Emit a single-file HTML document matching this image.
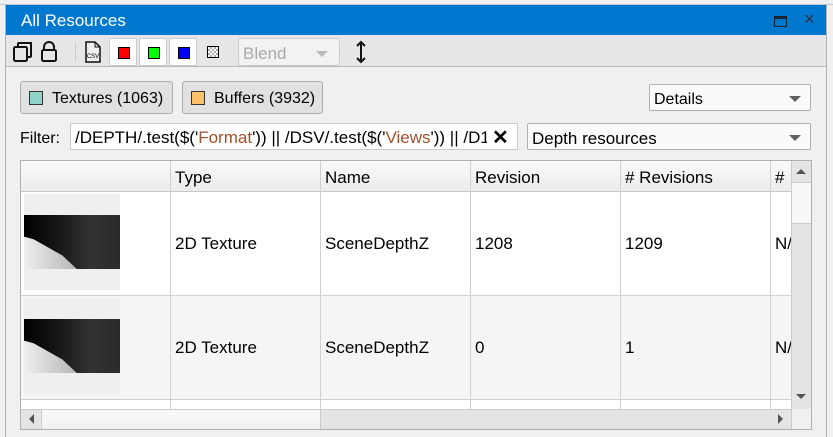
<!DOCTYPE html>
<html><head><style>
*{box-sizing:border-box;margin:0;padding:0}
body{width:833px;height:437px;background:#f0f0f0;font-family:"Liberation Sans",sans-serif;font-size:16px;color:#000;position:relative;overflow:hidden}
.a{position:absolute}
.title{left:6px;top:5px;width:800px;height:30px;background:#0078d0;color:#fff;font-size:17px}
.btn{background:#e1e1e1;border:1px solid #adadad;border-radius:3px}
.cb{background:#fff;border:1px solid #b0b0b0;border-radius:2px}
.arrow{width:0;height:0;border-left:6px solid transparent;border-right:6px solid transparent;border-top:6px solid #606060}
.vl{background:#d0d0d0;width:1px}
.hl{background:#d0d0d0;height:1px}
.th{left:0;top:21px;width:96px;height:54px;background:linear-gradient(90deg,#000,#1a1a1a 40%,#333 70%,#2a2a2a)}
.hill{left:0;top:0;width:96px;height:54px;background:linear-gradient(90deg,#eee,#bbb 50%,#888);clip-path:polygon(0 40%,10% 45%,25% 60%,40% 75%,55% 100%,0 100%)}
</style></head><body>
<div class="a" style="left:0;top:4px;width:833px;height:1px;background:#c8c8c8"></div>
<div class="a" style="left:5px;top:4px;width:1px;height:433px;background:#b0b0b0"></div>
<div class="a" style="left:826px;top:4px;width:1px;height:433px;background:#b0b0b0"></div>
<div class="a title" style="width:820px"><span class="a" style="left:15px;top:6px">All Resources</span>
<div class="a" style="left:768px;top:11px;width:13px;height:11px;border:1.5px solid #123;border-top-width:3px"></div>
<span class="a" style="left:798px;top:4px;color:#234;font-size:18px">×</span></div>
<div class="a" style="left:6px;top:35px;width:820px;height:32px;background:#e6e6e6;border-bottom:1px solid #b8b8b8"></div>
<svg class="a" style="left:12px;top:40px" width="60" height="24" viewBox="0 0 60 24" fill="none" stroke="#111" stroke-width="2">
<rect x="2" y="7" width="13" height="14" rx="1.5"/><path d="M6 7V4a1 1 0 0 1 1-1h12v13a1 1 0 0 1-1 1h-3"/>
<path d="M32 10V7a5 5 0 0 1 10 0v3"/><rect x="30" y="10" width="14" height="11" rx="1.5"/>
</svg>
<div class="a" style="left:75px;top:42px;width:1px;height:20px;background:#ccc"></div>
<svg class="a" style="left:83px;top:40px" width="20" height="24" viewBox="0 0 20 24"><path d="M3 2h9l5 5v15H3z" fill="#eee" stroke="#111" stroke-width="1.5"/><path d="M12 2v5h5" fill="none" stroke="#111"/><text x="10" y="18" font-size="6" text-anchor="middle" font-family="Liberation Sans">CSV</text></svg>
<div class="a" style="left:109px;top:38px;width:28px;height:28px;background:#fff;border:1px solid #ccc"><div class="a" style="left:8px;top:8px;width:12px;height:12px;background:#f00;border:1px solid #000"></div></div>
<div class="a" style="left:139px;top:38px;width:28px;height:28px;background:#fff;border:1px solid #ccc"><div class="a" style="left:8px;top:8px;width:12px;height:12px;background:#0f0;border:1px solid #000"></div></div>
<div class="a" style="left:169px;top:38px;width:28px;height:28px;background:#fff;border:1px solid #ccc"><div class="a" style="left:8px;top:8px;width:12px;height:12px;background:#00f;border:1px solid #000"></div></div>
<div class="a" style="left:207px;top:46px;width:12px;height:12px;border:1px solid #000;background:repeating-conic-gradient(#aaa 0 25%,#fff 0 50%) 0 0/4px 4px"></div>
<div class="a" style="left:238px;top:38px;width:102px;height:28px;background:#f2f2f2;border:1px solid #ccc;border-radius:3px;color:#aaa"><span class="a" style="left:4px;top:5px;font-size:17px">Blend</span><div class="a arrow" style="left:77px;top:12px;border-top-color:#bbb"></div></div>
<svg class="a" style="left:354px;top:40px" width="14" height="24" viewBox="0 0 14 24" fill="none" stroke="#111" stroke-width="2"><path d="M7 2v20M3 6l4-4 4 4M3 18l4 4 4-4"/></svg>

<div class="a btn" style="left:20px;top:81px;width:153px;height:33px"><div class="a" style="left:8px;top:9px;width:14px;height:14px;background:#8fd4c8;border:1px solid #333"></div><span class="a" style="left:31px;top:8px">Textures (1063)</span></div>
<div class="a btn" style="left:182px;top:81px;width:141px;height:33px"><div class="a" style="left:8px;top:9px;width:14px;height:14px;background:#fbc06a;border:1px solid #333"></div><span class="a" style="left:31px;top:8px">Buffers (3932)</span></div>
<div class="a cb" style="left:649px;top:84px;width:162px;height:27px;background:#fafafa"><span class="a" style="left:4px;top:6px">Details</span><div class="a arrow" style="left:139px;top:11px"></div></div>

<span class="a" style="left:20px;top:130px">Filter:</span>
<div class="a" style="left:70px;top:123px;width:448px;height:27px;background:#fff;border:1px solid #ccc;overflow:hidden"><span class="a" style="left:4px;top:4px;white-space:nowrap;width:412px;overflow:hidden;font-size:17px">/DEPTH/.test($('<span style="color:#a0522d">Format</span>')) || /DSV/.test($('<span style="color:#a0522d">Views</span>')) || /D16</span><span class="a" style="left:421px;top:1px;font-size:20px;font-weight:bold">✕</span></div>
<div class="a cb" style="left:527px;top:123px;width:284px;height:27px;background:#fafafa"><span class="a" style="left:4px;top:5px;font-size:17px">Depth resources</span><div class="a arrow" style="left:261px;top:11px"></div></div>

<div class="a" style="left:20px;top:160px;width:792px;height:270px;background:#fff;border:1px solid #b0b0b0;overflow:hidden;font-size:17px">
<div class="a" style="left:0;top:0;width:770px;height:31px;background:linear-gradient(#fafafa,#ececec);border-bottom:1px solid #c8c8c8"></div>
<div class="a" style="left:0;top:134px;width:770px;height:104px;background:#f5f5f5"></div>
<div class="a hl" style="left:0;top:134px;width:770px"></div>
<div class="a hl" style="left:0;top:238px;width:770px"></div>
<div class="a vl" style="left:149px;top:0;height:248px"></div>
<div class="a vl" style="left:299px;top:0;height:248px"></div>
<div class="a vl" style="left:449px;top:0;height:248px"></div>
<div class="a vl" style="left:599px;top:0;height:248px"></div>
<div class="a vl" style="left:749px;top:0;height:248px"></div>
<span class="a" style="left:154px;top:7px">Type</span><span class="a" style="left:304px;top:7px">Name</span><span class="a" style="left:454px;top:7px">Revision</span><span class="a" style="left:604px;top:7px"># Revisions</span><span class="a" style="left:754px;top:7px">#</span>
<div class="a" style="left:3px;top:33px;width:96px;height:96px;background:#efefef"><div class="a th"><div class="a hill"></div></div></div>
<div class="a" style="left:3px;top:137px;width:96px;height:96px;background:#efefef"><div class="a th"><div class="a hill"></div></div></div>
<span class="a" style="left:154px;top:73px">2D Texture</span><span class="a" style="left:304px;top:73px">SceneDepthZ</span><span class="a" style="left:454px;top:73px">1208</span><span class="a" style="left:604px;top:73px">1209</span><span class="a" style="left:754px;top:73px">N/</span>
<span class="a" style="left:154px;top:177px">2D Texture</span><span class="a" style="left:304px;top:177px">SceneDepthZ</span><span class="a" style="left:454px;top:177px">0</span><span class="a" style="left:604px;top:177px">1</span><span class="a" style="left:754px;top:177px">N/</span>
<div class="a" style="left:770px;top:0;width:21px;height:248px;background:#e4e4e4;border-left:1px solid #ccc"></div>
<div class="a" style="left:770px;top:21px;width:21px;height:42px;background:#f8f8f8;border:1px solid #ccc"></div>
<div class="a" style="left:775px;top:8px;border-left:5px solid transparent;border-right:5px solid transparent;border-bottom:5px solid #555"></div>
<div class="a" style="left:775px;top:233px;border-left:5px solid transparent;border-right:5px solid transparent;border-top:5px solid #555"></div>
<div class="a" style="left:0;top:248px;width:770px;height:21px;background:#e4e4e4;border-top:1px solid #ccc"></div>
<div class="a" style="left:20px;top:248px;width:280px;height:21px;background:linear-gradient(#fafafa,#f0f0f0);border:1px solid #ccc"></div>
<div class="a" style="left:8px;top:253px;border-top:5px solid transparent;border-bottom:5px solid transparent;border-right:5px solid #555"></div>
<div class="a" style="left:757px;top:253px;border-top:5px solid transparent;border-bottom:5px solid transparent;border-left:5px solid #555"></div>
<div class="a" style="left:770px;top:248px;width:21px;height:21px;background:#f0f0f0;border-left:1px solid #ccc"></div>
</div>
</body></html>
